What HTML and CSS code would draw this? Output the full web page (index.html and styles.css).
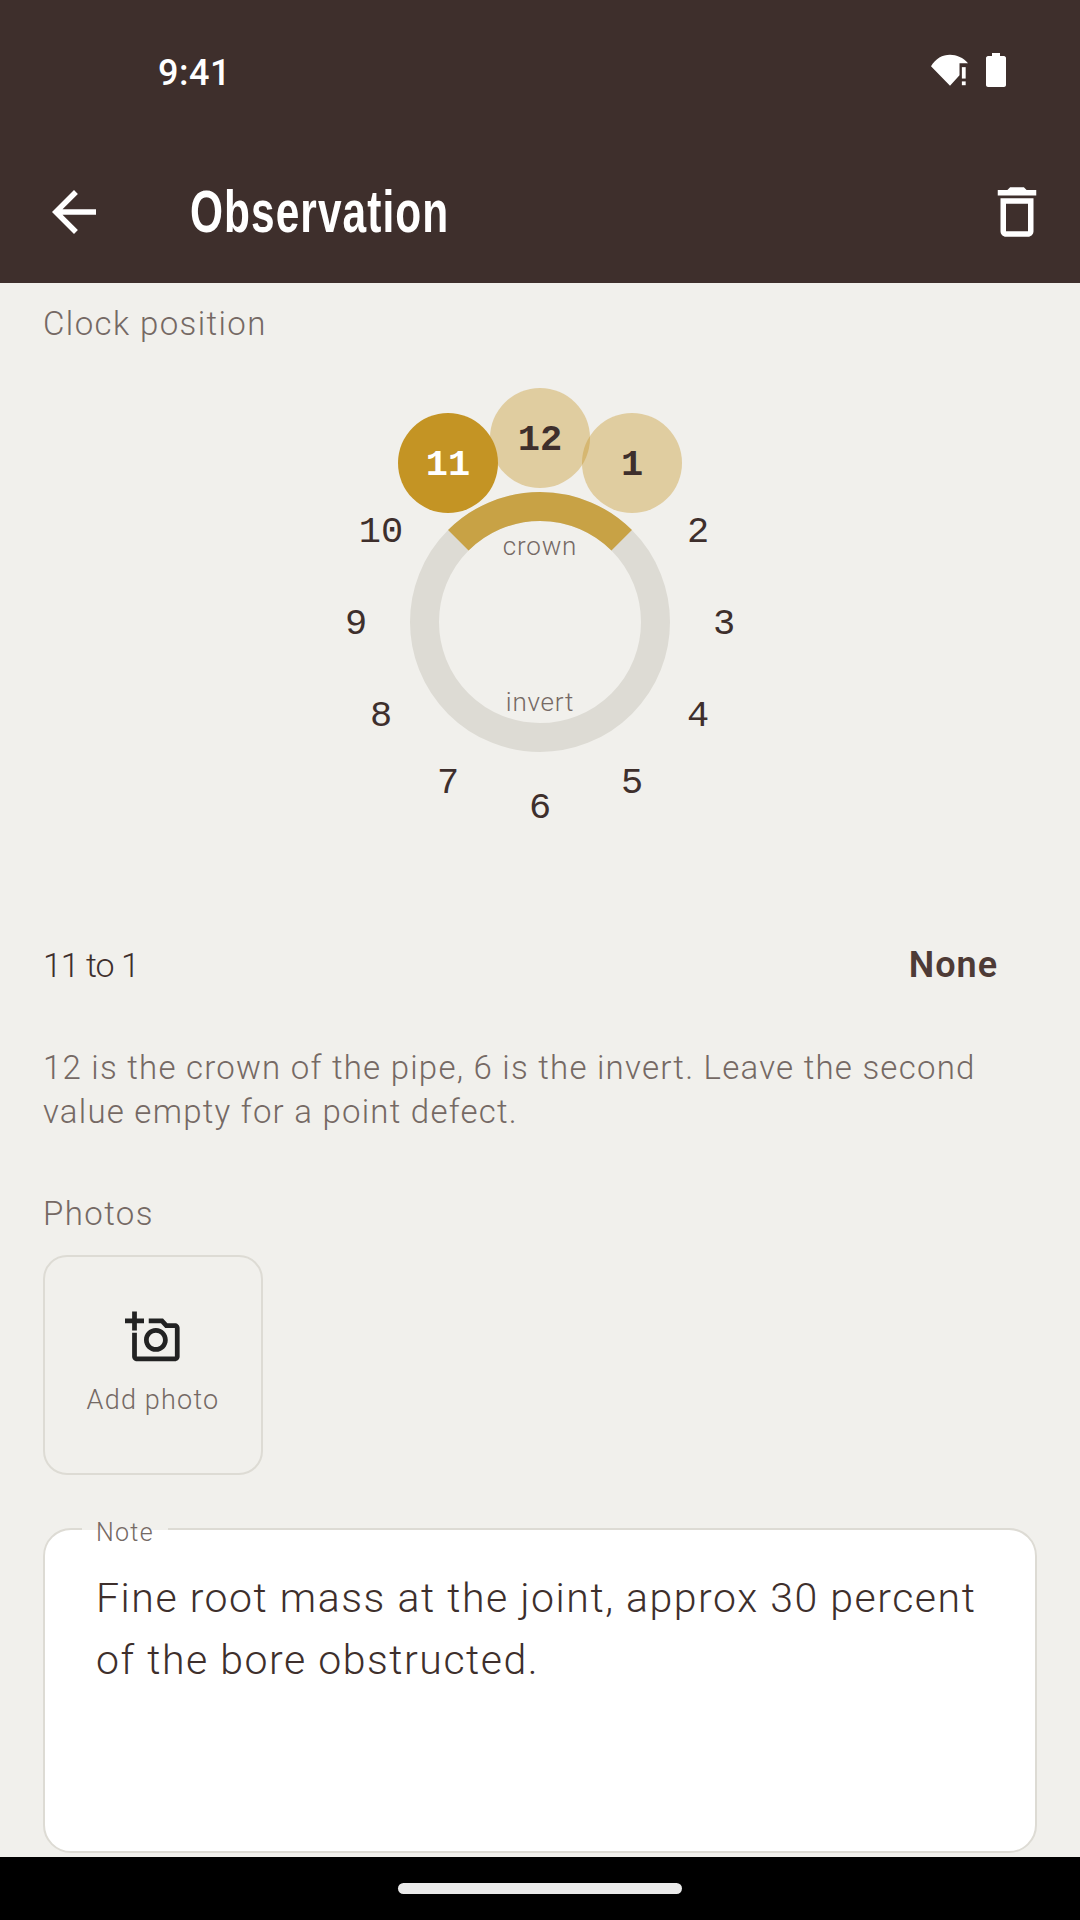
FILE: index.html
```html
<!DOCTYPE html>
<html lang="en">
<head>
<meta charset="utf-8">
<title>Observation</title>
<link rel="stylesheet" href="styles.css">
</head>
<body>
<div class="screen">
  <header class="top">
    <div class="status">
      <span class="time">9:41</span>
      <div class="status-icons">
        <svg class="wifi" viewBox="0 0 40 34"><path d="M0 13C5 5 12 1 20 1c7 0 14 3 19 9H30v12.500l-10 11z"/><rect x="32.500" y="14" width="4" height="12"/><rect x="32.500" y="29" width="4" height="4"/></svg>
        <svg class="battery" viewBox="0 0 20 34"><path d="M6 0h8v3h4c1 0 2 1 2 2v27c0 1-1 2-2 2H2c-1 0-2-1-2-2V5c0-1 1-2 2-2h4z"/></svg>
      </div>
    </div>
    <div class="appbar">
      <svg class="icon-lg back" viewBox="0 0 24 24"><path d="M20 11H7.830l5.590-5.590L12 4l-8 8 8 8 1.410-1.410L7.830 13H20v-2z"/></svg>
      <h1 class="title">Observation</h1>
      <svg class="icon-lg" viewBox="0 0 24 24"><path d="M6 19c0 1.100.900 2 2 2h8c1.100 0 2-.900 2-2V7H6v12zM8 9h8v10H8V9zm7.500-5l-1-1h-5l-1 1H5v2h14V4h-3.500z"/></svg>
    </div>
  </header>

  <main class="content">
    <div class="label clock-label">Clock position</div>

    <svg class="dial" viewBox="0 0 994 470">
      <circle class="ring" cx="497" cy="296" r="115.500"/>
      <path class="arc" d="M415.300 214.300A115.500 115.500 0 0 1 578.700 214.300"/>
      <text class="dial-cap" x="497" y="229">crown</text>
      <text class="dial-cap" x="497" y="385">invert</text>
      <circle class="pick-soft" cx="497" cy="112" r="50"/>
      <circle class="pick-soft" cx="589" cy="137" r="50"/>
      <circle class="pick-on" cx="405" cy="137" r="50"/>
      <text class="num strong" x="497" y="124">12</text>
      <text class="num strong light" x="405" y="149">11</text>
      <text class="num strong" x="589" y="149">1</text>
      <text class="num" x="655" y="216">2</text>
      <text class="num" x="681" y="308">3</text>
      <text class="num" x="655" y="400">4</text>
      <text class="num" x="589" y="467">5</text>
      <text class="num" x="497" y="492">6</text>
      <text class="num" x="405" y="467">7</text>
      <text class="num" x="338" y="400">8</text>
      <text class="num" x="313" y="308">9</text>
      <text class="num" x="338" y="216">10</text>
    </svg>

    <div class="range-row">
      <span class="range">11 to 1</span>
      <span class="none">None</span>
    </div>

    <p class="hint">12 is the crown of the pipe, 6 is the invert. Leave the second value empty for a point defect.</p>

    <div class="label photos-label">Photos</div>
    <div class="add-tile">
      <svg class="camera" viewBox="0 0 24 24"><path d="M21 6h-3.170L16 4h-6v2h5.120l1.830 2H21v12H5V10H3v10c0 1.100.900 2 2 2h16c1.100 0 2-.900 2-2V8c0-1.100-.900-2-2-2zM8 13c0 2.760 2.240 5 5 5s5-2.240 5-5-2.240-5-5-5-5 2.240-5 5zm5-3c1.650 0 3 1.350 3 3s-1.350 3-3 3-3-1.350-3-3 1.350-3 3-3zM5 6h3V4H5V1H3v3H0v2h3v3h2z"/></svg>
      <span class="add-text">Add photo</span>
    </div>

    <div class="note">
      <span class="note-legend">Note</span>
      <p class="note-text">Fine root mass at the joint, approx 30 percent of the bore obstructed.</p>
    </div>
  </main>

  <footer class="nav"><div class="pill"></div></footer>
</div>
</body>
</html>
```
FILE: styles.css
```css
* { box-sizing: border-box; }
html, body { margin: 0; padding: 0; }
body { width: 1080px; height: 1920px; overflow: hidden; font-family: Roboto, "Liberation Sans", sans-serif; background: #f1f0ec; color: #3e2f2c; }
.screen { width: 1080px; height: 1920px; display: flex; flex-direction: column; }

.top { height: 283px; background: #3e2f2c; color: #fff; display: flex; flex-direction: column; flex: none; }
.status { height: 177px; padding: 53px 74px 0 158px; display: flex; justify-content: space-between; align-items: flex-start; }
.time { font-size: 36px; font-weight: 500; line-height: 40px; letter-spacing: .5px; }
.status-icons { display: flex; gap: 17px; }
.wifi { width: 38px; height: 34px; fill: #fff; }
.battery { width: 20px; height: 34px; fill: #fff; }
.appbar { display: flex; align-items: center; padding: 2px 30px 0 41px; height: 68px; }
.icon-lg { width: 66px; height: 66px; fill: #fff; flex: none; }
.title { margin: 0 0 0 83px; flex: 1; font-family: "Liberation Sans", sans-serif; font-size: 60px; font-weight: 700; letter-spacing: 1.500px; line-height: 66px; transform: scaleX(.707); transform-origin: left center; }

.content { flex: 1; padding: 0 43px; display: flex; flex-direction: column; min-height: 0; }
.label { font-size: 33px; font-weight: 300; line-height: 40px; color: #756964; letter-spacing: 1.400px; }
.clock-label { margin-top: 21px; }
.dial { width: 994px; height: 470px; margin-top: -18px; overflow: visible; display: block; }
.ring { fill: none; stroke: #dddbd4; stroke-width: 29px; }
.arc { fill: none; stroke: #c8a245; stroke-width: 29px; }
.dial-cap { font-family: Roboto, sans-serif; font-size: 26px; font-weight: 300; letter-spacing: .8px; fill: #756964; text-anchor: middle; }
.pick-soft { fill: #c49424; fill-opacity: .38; }
.pick-on { fill: #c49424; }
.num { font-family: "Liberation Mono", monospace; font-size: 37px; fill: #3e2f2c; text-anchor: middle; }
.strong { font-weight: 700; }
.light { fill: #fff; }

.range-row { display: flex; justify-content: space-between; align-items: center; margin-top: 146px; padding-right: 39px; height: 46px; }
.range { font-size: 34px; font-weight: 300; letter-spacing: -1px; }
.none { font-size: 36px; font-weight: 600; color: #4e3b36; letter-spacing: 1px; }
.hint { margin: 57.500px 0 0; font-size: 33px; font-weight: 300; line-height: 44px; color: #756964; letter-spacing: 1.230px; }
.photos-label { margin-top: 60px; }
.add-tile { width: 220px; height: 220px; margin-top: 21px; border: 2px solid #dddbd4; border-radius: 24px; display: flex; flex-direction: column; align-items: center; padding-top: 52px; }
.camera { width: 57px; height: 57px; fill: #222; }
.add-text { font-size: 27px; font-weight: 300; line-height: 36px; color: #756964; letter-spacing: 1.200px; margin-top: 16px; }

.note { position: relative; margin-top: 53px; height: 325px; background: #fff; border: 2px solid #dddbd4; border-radius: 28px; padding: 37px 50px 0 51px; }
.note-legend { position: absolute; left: 37px; top: -11px; padding: 0 14px; background: linear-gradient(#f1f0ec 11px, #fff 11px); font-size: 25px; font-weight: 300; line-height: 28px; color: #756964; letter-spacing: 1.300px; }
.note-text { margin: 0; font-size: 41px; font-weight: 300; line-height: 62.500px; letter-spacing: 1.530px; color: #3e2f2c; }

.nav { height: 63px; background: #000; flex: none; display: flex; justify-content: center; padding-top: 26px; }
.pill { width: 284px; height: 11px; border-radius: 6px; background: #eaeaea; }
```
